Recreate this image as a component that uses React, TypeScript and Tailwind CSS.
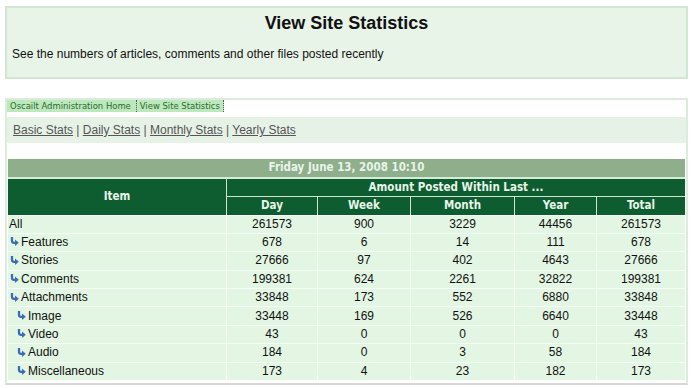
import React from 'react';

type Row = { name: string; level: number; vals: number[] };

const rows: Row[] = [
  { name: 'All', level: 0, vals: [261573, 900, 3229, 44456, 261573] },
  { name: 'Features', level: 1, vals: [678, 6, 14, 111, 678] },
  { name: 'Stories', level: 1, vals: [27666, 97, 402, 4643, 27666] },
  { name: 'Comments', level: 1, vals: [199381, 624, 2261, 32822, 199381] },
  { name: 'Attachments', level: 1, vals: [33848, 173, 552, 6880, 33848] },
  { name: 'Image', level: 2, vals: [33448, 169, 526, 6640, 33448] },
  { name: 'Video', level: 2, vals: [43, 0, 0, 0, 43] },
  { name: 'Audio', level: 2, vals: [184, 0, 3, 58, 184] },
  { name: 'Miscellaneous', level: 2, vals: [173, 4, 23, 182, 173] },
];

const cols = ['Day', 'Week', 'Month', 'Year', 'Total'];

// little blue "sub item" arrow
function SubArrow() {
  return (
    <svg width="9" height="9" viewBox="0 0 9 9" className="inline-block mr-[2px] -mt-[2px] align-middle">
      <path d="M2 0 V3.8 Q2 5.8 4 5.8 H5.5" fill="none" stroke="#3a6db5" strokeWidth="2.3" />
      <path d="M5 2.6 L8.8 5.8 L5 9 Z" fill="#3a6db5" />
    </svg>
  );
}

const head = "font-['DejaVu_Sans_Condensed','DejaVu_Sans',sans-serif] font-bold text-[11.5px] text-[#e8f5e8]";

export default function App() {
  return (
    <div className="w-[693px] h-[388px] overflow-hidden bg-white px-[5px] pt-[6px] font-['Liberation_Sans',Arial,sans-serif] text-[#111]">
      {/* header box */}
      <div className="h-[73px] border-2 border-[#d2e7d2] bg-[#e8f4e8]">
        <h1 className="mt-[4px] text-center text-[18px] font-bold leading-[22px]">View Site Statistics</h1>
        <p className="mt-[13px] pl-[5px] text-[12px] leading-[15px]">
          See the numbers of articles, comments and other files posted recently
        </p>
      </div>

      {/* main panel */}
      <div className="mt-[19px] h-[287px] border-2 border-[#dcecdc] border-b-[#d4d8d4]">
        <div className="flex h-[12px] items-stretch font-['DejaVu_Sans_Condensed','DejaVu_Sans',sans-serif] text-[9.4px] leading-[12px] text-[#2c6a2c]">
          <span className="bg-[#bde8bd] pl-[3px] pr-[5px]">Oscailt Administration Home</span>
          <span className="border-x border-dotted border-[#555] bg-[#bde8bd] px-[3px]">View Site Statistics</span>
        </div>

        <div className="mt-[5px] h-[26px] bg-[#e7f2e7] pl-[6px] pt-[6px] text-[12px] leading-[15px] text-[#555]">
          <a className="underline">Basic Stats</a> | <a className="underline">Daily Stats</a> |{' '}
          <a className="underline">Monthly Stats</a> | <a className="underline">Yearly Stats</a>
        </div>

        <table className="mt-[16px] ml-px w-[677px] table-fixed border-separate border-spacing-0 text-[12px]">
          <colgroup>
            <col className="w-[219px]" />
            <col className="w-[91px]" />
            <col className="w-[93px]" />
            <col className="w-[104px]" />
            <col className="w-[82px]" />
            <col className="w-[88px]" />
          </colgroup>
          <thead>
            <tr>
              <th colSpan={6} className={`${head} h-[20px] border-b-2 border-[#d6ecd6] bg-[#8fae8c] text-center`}>
                Friday June 13, 2008 10:10
              </th>
            </tr>
            <tr>
              <th rowSpan={2} className={`${head} border-r border-[#cfe5cf] bg-[#0d5d30] text-center`}>
                Item
              </th>
              <th colSpan={5} className={`${head} h-[18px] border-b border-[#cfe5cf] bg-[#0d5d30] text-center`}>
                Amount Posted Within Last ...
              </th>
            </tr>
            <tr>
              {cols.map((c, i) => (
                <th
                  key={c}
                  className={`${head} h-[17px] ${i < 4 ? 'border-r border-[#cfe5cf]' : ''} bg-[#0d5d30] text-center`}
                >
                  {c}
                </th>
              ))}
            </tr>
          </thead>
          <tbody>
            {rows.map((r) => (
              <tr key={r.name} className="h-[18.4px]">
                <td
                  className={`border-t border-r border-[#f6fcf6] bg-[#e3f6e3] leading-[17px] ${
                    r.level === 0 ? 'pl-[1px]' : r.level === 1 ? 'pl-[2px]' : 'pl-[9px]'
                  }`}
                >
                  {r.level > 0 && <SubArrow />}
                  {r.name}
                </td>
                {r.vals.map((v, i) => (
                  <td
                    key={i}
                    className={`border-t border-[#f6fcf6] bg-[#e3f6e3] text-center leading-[17px] ${i < 4 ? 'border-r' : ''}`}
                  >
                    {v}
                  </td>
                ))}
              </tr>
            ))}
          </tbody>
        </table>
      </div>
    </div>
  );
}
